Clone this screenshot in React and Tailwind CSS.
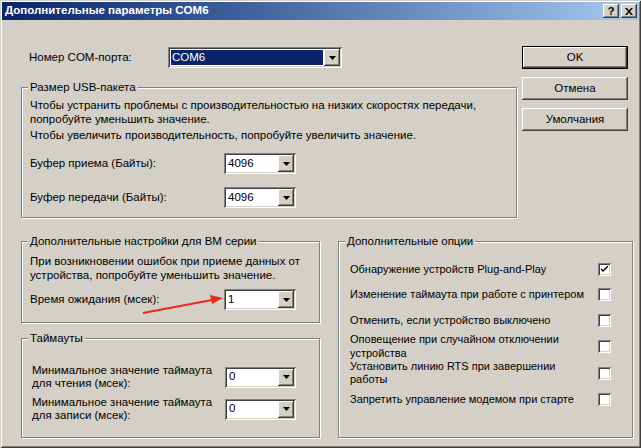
import React from "react";

const raised =
  "shadow-[inset_-1px_-1px_0_#404040,inset_1px_1px_0_#ffffff,inset_-2px_-2px_0_#808080,inset_2px_2px_0_#d4d0c8]";
const sunken =
  "shadow-[inset_1px_1px_0_#808080,inset_-1px_-1px_0_#ffffff,inset_2px_2px_0_#404040,inset_-2px_-2px_0_#d4d0c8]";

const Combo = ({ value, width, selected }) => (
  <div className={`flex h-[21px] bg-white p-[2px] ${sunken}`} style={{ width }}>
    <div className="flex-1 flex items-center pl-[1px] pr-[1px] py-[1px]">
      <span
        className={`h-full flex items-center pl-[1px] w-full ${
          selected ? "bg-[#0a246a] text-white" : "text-black"
        }`}
      >
        {value}
      </span>
    </div>
    <div className={`w-[16px] h-[17px] bg-[#d4d0c8] flex items-center justify-center ${raised}`}>
      <svg width="7" height="4" viewBox="0 0 7 4">
        <path d="M0 0h7L3.5 4z" fill="#000" />
      </svg>
    </div>
  </div>
);

const Group = ({ title, className, children }) => (
  <div
    className={`border border-[#808080] shadow-[1px_1px_0_#ffffff,inset_1px_1px_0_#ffffff] ${className}`}
  >
    <div className="-mt-[7px] ml-[6px] px-[2px] w-fit bg-[#d4d0c8] leading-[13px] text-[11.5px]">{title}</div>
    {children}
  </div>
);

const Button = ({ children, isDefault }) => (
  <div className={`w-[106px] h-[23px] ${isDefault ? "border border-black" : ""}`}>
    <div className={`w-full h-full bg-[#d4d0c8] flex items-center justify-center ${raised}`}>
      {children}
    </div>
  </div>
);

const Check = ({ checked }) => (
  <div className={`w-[13px] h-[13px] bg-white shrink-0 flex items-center justify-center ${sunken}`}>
    {checked && (
      <svg width="7" height="7" viewBox="0 0 7 7">
        <path d="M0 2v2l2 2 5-5V-1L2 4z" fill="#000" />
      </svg>
    )}
  </div>
);

const options = [
  { text: "Обнаружение устройств Plug-and-Play", checked: true, cls: "mt-[14px] h-[14px]" },
  { text: "Изменение таймаута при работе с принтером", cls: "mt-[11px] h-[14px]" },
  { text: "Отменить, если устройство выключено", cls: "mt-[12px] h-[14px]" },
  { text: "Оповещение при случайном отключении\nустройства", cls: "mt-[5px] h-[28px] leading-[14px]" },
  { text: "Установить линию RTS при завершении\nработы", cls: "h-[26px] leading-[13px]" },
  { text: "Запретить управление модемом при старте", cls: "mt-[6px] h-[14px]" },
];

export default function App() {
  return (
    <div
      className="relative w-[641px] h-[448px] bg-[#d4d0c8] p-[2px] text-black text-[11.5px] font-['Liberation_Sans',Arial,sans-serif] shadow-[inset_1px_1px_0_#d4d0c8,inset_-1px_-1px_0_#404040,inset_2px_2px_0_#ffffff,inset_-2px_-2px_0_#808080] overflow-hidden"
    >
      {/* title bar */}
      <div className="h-[18px] flex items-center justify-between bg-gradient-to-r from-[#0a246a] to-[#a6caf0] pl-[3px] pr-[2px]">
        <span className="text-white font-bold text-[11.5px]">Дополнительные параметры COM6</span>
        <div className="flex gap-[2px]">
          <div className={`w-[16px] h-[14px] bg-[#d4d0c8] flex items-center justify-center font-bold text-[11px] ${raised}`}>?</div>
          <div className={`w-[16px] h-[14px] bg-[#d4d0c8] flex items-center justify-center ${raised}`}>
            <svg width="8" height="7" viewBox="0 0 8 7">
              <path d="M0 0h2l2 2.5L6 0h2L5 3.5 8 7H6L4 4.5 2 7H0l3-3.5z" fill="#000" />
            </svg>
          </div>
        </div>
      </div>

      {/* top row */}
      <div className="flex pl-[19px]">
        <div className="w-[496px]">
          <div className="flex items-center h-[21px] mt-[27px]">
            <span className="pl-[8px] w-[147px]">Номер COM-порта:</span>
            <Combo value="COM6" width={174} selected />
          </div>
          <Group title="Размер USB-пакета" className="mt-[19px] h-[131px]">
            <div className="pl-[8px] mt-[4px] leading-[14px]">
              <div>Чтобы устранить проблемы с производительностью на низких скоростях передачи,</div>
              <div>попробуйте уменьшить значение.</div>
              <div className="mt-[2px]">Чтобы увеличить производительность, попробуйте увеличить значение.</div>
            </div>
            <div className="flex items-center h-[21px] mt-[11px]">
              <span className="pl-[8px] w-[202px]">Буфер приема (Байты):</span>
              <Combo value="4096" width={72} />
            </div>
            <div className="flex items-center h-[21px] mt-[13px]">
              <span className="pl-[8px] w-[202px]">Буфер передачи (Байты):</span>
              <Combo value="4096" width={72} />
            </div>
          </Group>
        </div>
        <div className="ml-[5px] mt-[26px] flex flex-col gap-[8px]">
          <Button isDefault>OK</Button>
          <Button>Отмена</Button>
          <Button>Умолчания</Button>
        </div>
      </div>

      {/* bottom row */}
      <div className="flex pl-[19px] mt-[23px]">
        <div className="w-[299px]">
          <Group title="Дополнительные настройки для BM серии" className="h-[82px]">
            <div className="pl-[8px] mt-[6px] leading-[14px]">
              <div>При возникновении ошибок при приеме данных от</div>
              <div>устройства, попробуйте уменьшить значение.</div>
            </div>
            <div className="flex items-center h-[21px] mt-[7px]">
              <span className="pl-[8px] w-[202px]">Время ожидания (мсек):</span>
              <Combo value="1" width={72} />
            </div>
          </Group>
          <Group title="Таймауты" className="mt-[15px] h-[100px]">
            <div className="flex items-center h-[26px] mt-[19px]">
              <span className="pl-[10px] w-[203px] leading-[13px]">
                Минимальное значение таймаута
                <br />
                для чтения (мсек):
              </span>
              <Combo value="0" width={71} />
            </div>
            <div className="flex items-center h-[26px] mt-[6px]">
              <span className="pl-[10px] w-[203px] leading-[13px]">
                Минимальное значение таймаута
                <br />
                для записи (мсек):
              </span>
              <Combo value="0" width={71} />
            </div>
          </Group>
        </div>
        <Group title="Дополнительные опции" className="ml-[18px] w-[295px] h-[197px]">
          {options.map((o) => (
            <div key={o.text} className={`flex items-center pl-[11px] text-[11px] ${o.cls}`}>
              <span className="w-[248px] whitespace-pre-line">{o.text}</span>
              <Check checked={o.checked} />
            </div>
          ))}
        </Group>
      </div>

      {/* red annotation arrow */}
      <svg className="absolute left-0 top-0 pointer-events-none" width="641" height="448">
        <line x1="143" y1="313" x2="212" y2="300" stroke="#e82a1c" strokeWidth="2" />
        <path d="M223 298 L210 295 L212 304 Z" fill="#e82a1c" />
      </svg>
    </div>
  );
}
